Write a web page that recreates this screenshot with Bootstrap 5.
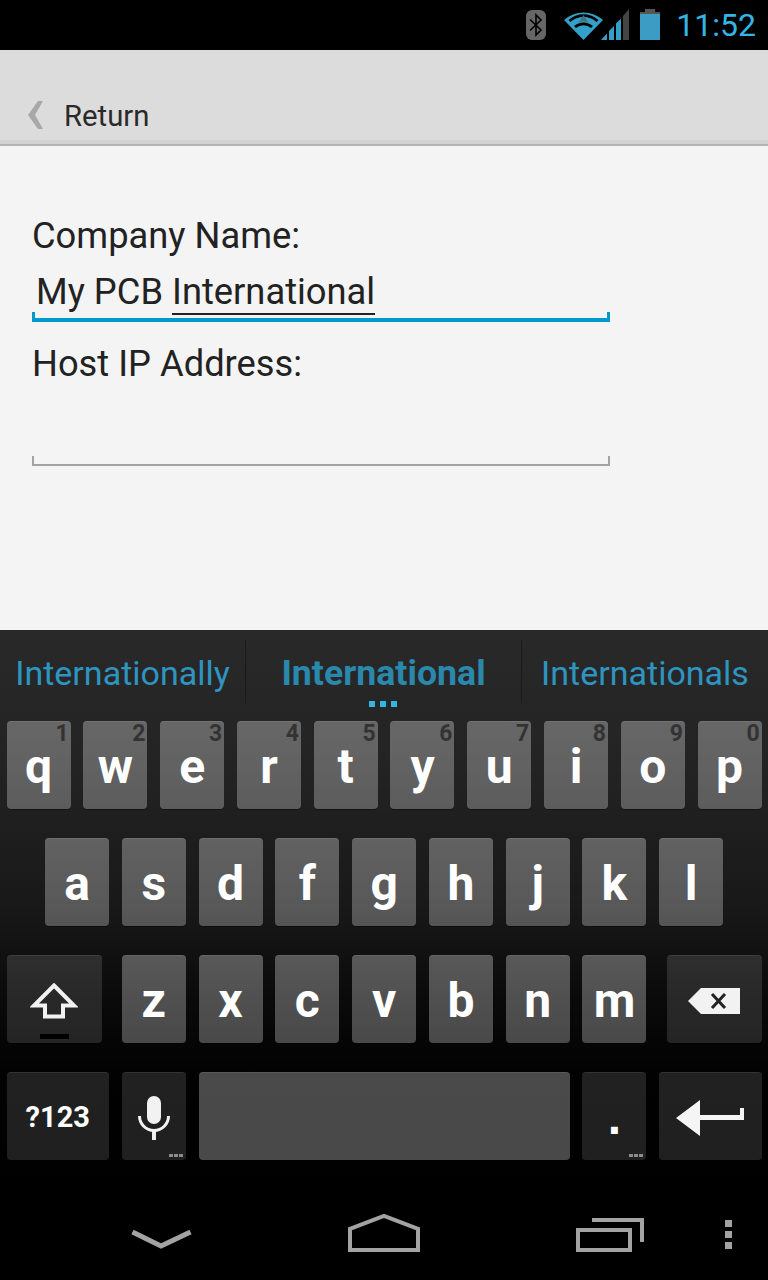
<!DOCTYPE html>
<html lang="en">
<head>
  <meta charset="UTF-8" />
  <title>Company settings</title>
  <meta name="viewport" content="width=device-width, initial-scale=1" />
  <link href="https://cdn.jsdelivr.net/npm/bootstrap@5.3.2/dist/css/bootstrap.min.css" rel="stylesheet">
  <style>
    html, body { height: 100%; }
    body { font-family: Roboto, "Liberation Sans", sans-serif; background: #000; overflow: hidden; }
    .phone { width: 768px; height: 1280px; }

    .status-bar { height: 50px; background: #000; padding-right: 12px; }
    .clock { color: #33b5e5; font-size: 32px; line-height: 50px; margin-left: 15px; }
    .bt-icon { margin-right: 18px; }
    .net-icon { margin-right: 9px; }

    .back-bar { height: 96px; background: #dcdcdc; border-bottom: 2px solid #b2b2b2; box-shadow: inset 0 -4px 0 #d2d2d2; padding: 0 0 11px 28px; }
    .back-label { font-size: 29.3px; line-height: 34px; color: #2a2a2a; margin-left: 20px; }

    .form-area { height: 484px; background: #f4f4f4; padding: 70px 158px 0 32px; }
    .field-label { font-size: 36.3px; line-height: 40px; color: #222; margin: 0; display: block; }
    .field-box { height: 82px; padding: 15px 5px 0 4px; font-size: 36.3px; line-height: 42px; color: #222; border-bottom: 2px solid #a3a3a3; position: relative; }
    .field-box::before, .field-box::after { content: ""; position: absolute; bottom: 0; width: 2px; height: 8px; background: #a3a3a3; }
    .field-box::before { left: 0; }
    .field-box::after { right: 0; }
    .field-box.is-focused { height: 66px; border-bottom: 4px solid #0099cc; margin-bottom: 22px; }
    .field-box.is-focused::before, .field-box.is-focused::after { width: 3px; height: 6px; background: #0099cc; }
    .composing { border-bottom: 2px solid #222; display: inline-block; line-height: 42px; height: 44px; }

    .keyboard { height: 557px; background: linear-gradient(#292929 0%, #232323 25%, #181818 50%, #0a0a0a 66%, #020202 80%, #000 100%); }
    .strip { height: 91px; padding-top: 10px; }
    .strip-cell { height: 63px; font-size: 34px; line-height: 66px; color: #2e94c0; text-align: center; position: relative; }
    .strip-cell.first { width: 245px; }
    .strip-cell.mid { width: 277px; border-left: 1px solid #1a1a1a; border-right: 1px solid #1a1a1a; font-size: 35.7px; font-weight: 700; color: #2a88ad; }
    .strip-cell.last { width: 246px; }
    .more-dots { position: absolute; left: 123px; top: 61px; gap: 5px; }
    .more-dots i { width: 6px; height: 6px; background: #33b5e5; display: block; }

    .key-grid { display: grid; grid-template-columns: repeat(20, 38.4px); row-gap: 29px; padding-left: .2px; }
    .kkey { grid-column: span 2; height: 88px; margin: 0 6.4px; border-radius: 4px; position: relative; color: #fff; font-size: 48px; font-weight: 700; line-height: 1; padding-top: 3px; background: linear-gradient(rgba(255,255,255,.3), rgba(255,255,255,.27)); box-shadow: inset 0 1px 0 rgba(255,255,255,.08), 0 1px 0 rgba(0,0,0,.4); }
    .kkey.fn { background: rgba(255,255,255,.125); }
    .kkey.w3 { grid-column: span 3; }
    .kkey.w10 { grid-column: span 10; background: rgba(255,255,255,.285); }
    .kkey.start2 { grid-column: 2 / span 2; }
    .kkey.shift { margin-right: 13px; }
    .kkey.back { margin-left: 14px; }
    .kkey.sym { font-size: 29px; }
    .kkey.dot { font-family: "Liberation Sans", sans-serif; }
    .hint { position: absolute; top: 1px; right: 2px; font-family: Roboto, sans-serif; font-size: 23px; font-weight: 700; line-height: 24px; color: #333; }
    .long-press { position: absolute; right: 3px; bottom: 3px; width: 14px; height: 3px; background: repeating-linear-gradient(90deg, #8c8c8c 0 4px, transparent 4px 5px); }
    .shift-lamp { position: absolute; left: 33px; bottom: 4px; width: 29px; height: 5px; background: #000; }

    .nav-bar { height: 93px; background: #000; }
  </style>
</head>
<body>

  <div class="phone d-flex flex-column">

    <!-- status bar -->
    <div class="status-bar d-flex justify-content-end align-items-center">
      <svg width="20" height="30" viewBox="0 0 20 30" class="bt-icon">
        <rect width="20" height="30" rx="6" fill="#666"/>
        <path d="M4 9.500 15 20 10 25V5l5 5L4 20.500" fill="none" stroke="#000" stroke-width="1.600"/>
      </svg>
      <svg width="66" height="32" viewBox="0 0 66 32" class="net-icon">
        <path d="M0 11A29 29 0 0 1 39 11L19.500 31Z" fill="#33a0c8"/>
        <path d="M5.500 12A21 21 0 0 1 33.500 12" fill="none" stroke="#000" stroke-width="2.800"/>
        <path d="M11 18A13 13 0 0 1 28 18" fill="none" stroke="#000" stroke-width="2.800"/>
        <path d="M19.500 6 14.500 14A9 9 0 0 1 24.500 14Z" fill="#4a6f80"/>
        <path d="M37 31 43 24.500V31ZM45 31V22L50 17V31ZM52 31V14.500L57 9.500V31Z" fill="#33a0c8"/>
        <path d="M59 31V7L65 0V31Z" fill="#444"/>
      </svg>
      <svg width="22" height="32" viewBox="0 0 22 32">
        <path d="M6 0h10v3h5v4H1V3h5Z" fill="#555"/>
        <rect x="1" y="5" width="20" height="26" fill="#3d9cc4"/>
      </svg>
      <span class="clock">11:52</span>
    </div>

    <!-- back bar -->
    <div class="back-bar d-flex align-items-end">
      <svg width="16" height="28" viewBox="0 0 16 28" class="mb-1">
        <path d="M15 0H10L0 14l10 14h5L7 14Z" fill="#a8a8a8"/>
      </svg>
      <span class="back-label">Return</span>
    </div>

    <!-- form -->
    <div class="form-area">
      <label class="field-label">Company Name:</label>
      <div class="field-box is-focused">My PCB <span class="composing">International</span></div>
      <label class="field-label">Host IP Address:</label>
      <div class="field-box"></div>
    </div>

    <!-- keyboard -->
    <div class="keyboard">
      <div class="strip d-flex">
        <div class="strip-cell first">Internationally</div>
        <div class="strip-cell mid">International
          <div class="more-dots d-flex"><i></i><i></i><i></i></div>
        </div>
        <div class="strip-cell last">Internationals</div>
      </div>

      <div class="key-grid">
        <div class="kkey d-flex justify-content-center align-items-center">q<span class="hint">1</span></div>
        <div class="kkey d-flex justify-content-center align-items-center">w<span class="hint">2</span></div>
        <div class="kkey d-flex justify-content-center align-items-center">e<span class="hint">3</span></div>
        <div class="kkey d-flex justify-content-center align-items-center">r<span class="hint">4</span></div>
        <div class="kkey d-flex justify-content-center align-items-center">t<span class="hint">5</span></div>
        <div class="kkey d-flex justify-content-center align-items-center">y<span class="hint">6</span></div>
        <div class="kkey d-flex justify-content-center align-items-center">u<span class="hint">7</span></div>
        <div class="kkey d-flex justify-content-center align-items-center">i<span class="hint">8</span></div>
        <div class="kkey d-flex justify-content-center align-items-center">o<span class="hint">9</span></div>
        <div class="kkey d-flex justify-content-center align-items-center">p<span class="hint">0</span></div>

        <div class="kkey start2 d-flex justify-content-center align-items-center">a</div>
        <div class="kkey d-flex justify-content-center align-items-center">s</div>
        <div class="kkey d-flex justify-content-center align-items-center">d</div>
        <div class="kkey d-flex justify-content-center align-items-center">f</div>
        <div class="kkey d-flex justify-content-center align-items-center">g</div>
        <div class="kkey d-flex justify-content-center align-items-center">h</div>
        <div class="kkey d-flex justify-content-center align-items-center">j</div>
        <div class="kkey d-flex justify-content-center align-items-center">k</div>
        <div class="kkey d-flex justify-content-center align-items-center">l</div>

        <div class="kkey fn w3 shift d-flex justify-content-center align-items-center">
          <svg width="48" height="36" viewBox="0 0 48 36">
            <path d="M24 2.500 44 22.500H33V33.500H15V22.500H4Z" fill="none" stroke="#f2f2f2" stroke-width="4"/>
          </svg>
          <span class="shift-lamp"></span>
        </div>
        <div class="kkey d-flex justify-content-center align-items-center">z</div>
        <div class="kkey d-flex justify-content-center align-items-center">x</div>
        <div class="kkey d-flex justify-content-center align-items-center">c</div>
        <div class="kkey d-flex justify-content-center align-items-center">v</div>
        <div class="kkey d-flex justify-content-center align-items-center">b</div>
        <div class="kkey d-flex justify-content-center align-items-center">n</div>
        <div class="kkey d-flex justify-content-center align-items-center">m</div>
        <div class="kkey fn w3 back d-flex justify-content-center align-items-center">
          <svg width="52" height="26" viewBox="0 0 52 26">
            <path d="M0 13 13 0H52V26H13Z" fill="#f2f2f2"/>
            <path d="M24 6 37 20M37 6 24 20" stroke="#222" stroke-width="3"/>
          </svg>
        </div>

        <div class="kkey fn w3 sym d-flex justify-content-center align-items-center">?123</div>
        <div class="kkey fn d-flex justify-content-center align-items-center">
          <svg width="32" height="44" viewBox="0 0 32 44">
            <rect x="9" y="0" width="14" height="28" rx="7" fill="#f2f2f2"/>
            <path d="M1.500 20a14.500 14.500 0 0 0 29 0" fill="none" stroke="#f2f2f2" stroke-width="3"/>
            <rect x="14" y="34" width="4" height="10" fill="#f2f2f2"/>
          </svg>
          <span class="long-press"></span>
        </div>
        <div class="kkey w10"></div>
        <div class="kkey fn dot d-flex justify-content-center align-items-center">.<span class="long-press"></span></div>
        <div class="kkey fn w3 d-flex justify-content-center align-items-center">
          <svg width="68" height="36" viewBox="0 0 68 36">
            <path d="M0 18 24 0V15H64V8H68V20H24V36Z" fill="#f5f5f5"/>
          </svg>
        </div>
      </div>
    </div>

    <!-- system buttons -->
    <div class="nav-bar">
      <svg width="768" height="93" viewBox="0 0 768 93">
        <g fill="none" stroke="#a3a3a3" stroke-width="4">
          <path d="M132.500 45 161 59 190.500 45" stroke-width="5"/>
          <path d="M350 63V42L384 29 418 42V63Z"/>
          <path d="M578 43H630V63H578Z"/>
          <path d="M592 33H642V55"/>
        </g>
        <g fill="#a3a3a3">
          <rect x="725" y="33" width="7" height="7"/>
          <rect x="725" y="44" width="7" height="7"/>
          <rect x="725" y="55" width="7" height="7"/>
        </g>
      </svg>
    </div>

  </div>

  <script src="https://cdn.jsdelivr.net/npm/bootstrap@5.3.2/dist/js/bootstrap.bundle.min.js"></script>
</body>
</html>
